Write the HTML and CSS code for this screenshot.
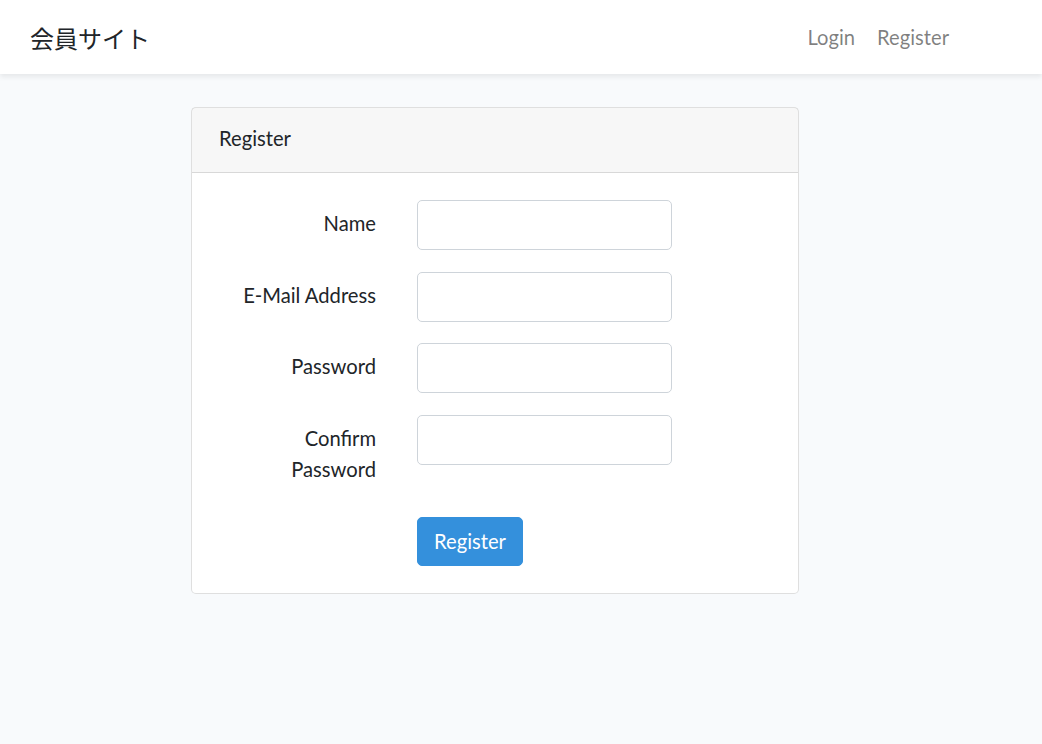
FILE: index.html
```html
<!DOCTYPE html>
<html lang="ja">
  <head>
    <title>会員サイト</title>
    <meta charset="utf-8" />
    <link rel="stylesheet" href="styles.css">
  </head>
  <body>
    <nav class="navbar">
      <a class="brand" href="#">会員サイト</a>
      <ul class="nav-links">
        <li><a href="#">Login</a></li>
        <li><a href="#">Register</a></li>
      </ul>
    </nav>

    <main class="content">
      <div class="card">
        <div class="card-header">Register</div>
        <div class="card-body">
          <form class="form">
            <label class="form-label" for="name">Name</label>
            <input class="form-input" id="name" type="text" />

            <label class="form-label" for="email">E-Mail Address</label>
            <input class="form-input" id="email" type="email" />

            <label class="form-label" for="password">Password</label>
            <input class="form-input" id="password" type="password" />

            <label class="form-label" for="password-confirm">Confirm<br />Password</label>
            <input class="form-input" id="password-confirm" type="password" />

            <span></span>
            <div><button class="btn" type="submit">Register</button></div>
          </form>
        </div>
      </div>
    </main>
  </body>
</html>
```

FILE: styles.css
```css
body {
  margin: 0;
  background-color: #f8fafc;
  color: #212529;
  font-family: "Lato", "Noto Sans CJK JP", sans-serif;
  font-size: 20.2px;
  line-height: 31px;
}

.navbar {
  display: flex;
  align-items: center;
  justify-content: space-between;
  height: 74px;
  padding: 0 82px 0 30px;
  background-color: #fff;
  box-shadow: 0 3px 5px rgba(0, 0, 0, 0.075);
}

.brand {
  font-family: "Noto Sans CJK JP", sans-serif;
  font-size: 24px;
  color: #212529;
  text-decoration: none;
}

.nav-links {
  display: flex;
  list-style: none;
  margin: 0;
  padding: 0;
}

.nav-links a {
  display: block;
  padding: 0 11px;
  color: rgba(0, 0, 0, 0.5);
  text-decoration: none;
}

.content {
  padding: 33px 0 0 191px;
}

.card {
  width: 606px;
  background-color: #fff;
  border: 1px solid rgba(0, 0, 0, 0.125);
  border-radius: 5px;
}

.card-header {
  padding: 15px 27px 18px;
  background-color: rgba(0, 0, 0, 0.03);
  border-bottom: 1px solid rgba(0, 0, 0, 0.125);
}

.card-body {
  padding: 27px;
}

.form {
  display: grid;
  grid-template-columns: 157px 255px;
  column-gap: 41px;
  row-gap: 21.5px;
}

.form-label {
  padding: 8px 0 11px;
  text-align: right;
}

.form-input {
  box-sizing: border-box;
  height: 50px;
  width: 255px;
  padding: 8px 16px;
  border: 1px solid #ced4da;
  border-radius: 5px;
  font: inherit;
  color: #495057;
}

.btn {
  padding: 8px 16px;
  border: 1px solid #3490dc;
  border-radius: 5px;
  background-color: #3490dc;
  color: #fff;
  font: inherit;
}
```
